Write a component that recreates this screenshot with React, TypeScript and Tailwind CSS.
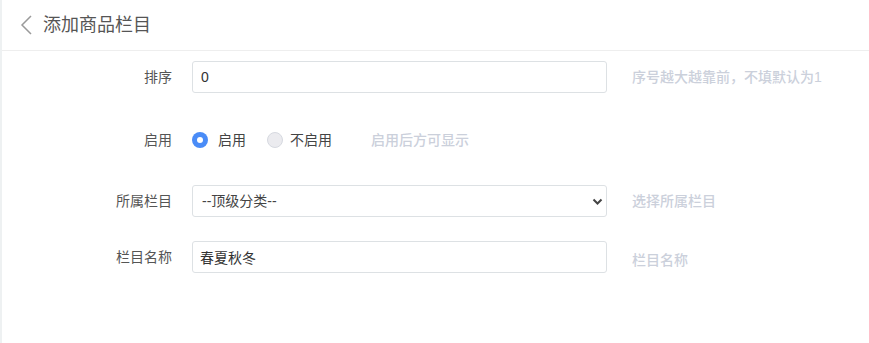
const font = { fontFamily: '"Liberation Sans", "Noto Sans CJK SC", sans-serif' };

function Label({ children }: { children: React.ReactNode }) {
  return <div className="w-[170px] shrink-0 text-right text-[14px] text-[#555]">{children}</div>;
}

function Hint({ children }: { children: React.ReactNode }) {
  return <div className="ml-[25px] text-[14px] font-medium text-[#cbd0db]">{children}</div>;
}

export default function App() {
  return (
    <div className="h-[343px] w-[869px] bg-white border-l-2 border-[#eef1f2]" style={font}>
      <div className="flex h-[51px] items-center border-b border-[#eeeeee] pl-[18px]">
        <svg className="h-[20px] w-[12px]" viewBox="0 0 12 20" fill="none">
          <path d="M11 1 L2 10 L11 19" stroke="#9a9a9a" strokeWidth="1.5" />
        </svg>
        <span className="ml-[11px] text-[18px] text-[#555]">添加商品栏目</span>
      </div>

      <div className="pt-[10px]">
        <div className="flex h-[32px] items-center">
          <Label>排序</Label>
          <input
            defaultValue="0"
            className="ml-5 h-[32px] w-[415px] rounded-[3px] border border-[#dde1e4] px-[8px] text-[14px] text-[#333] outline-none"
          />
          <Hint>序号越大越靠前，不填默认为1</Hint>
        </div>

        <div className="mt-[31px] flex h-[32px] items-center">
          <Label>启用</Label>
          <div className="ml-5 flex items-center text-[14px] text-[#444]">
            <span className="flex h-[16px] w-[16px] items-center justify-center rounded-full bg-[#4a8cf7]">
              <span className="h-[6px] w-[6px] rounded-full bg-white" />
            </span>
            <span className="ml-[10px]">启用</span>
            <span className="ml-[21px] h-[16px] w-[16px] rounded-full border border-[#d6d9e0] bg-[#ebebef]" />
            <span className="ml-[7px]">不启用</span>
          </div>
          <Hint>
            <span className="ml-[14px]">启用后方可显示</span>
          </Hint>
        </div>

        <div className="mt-[29px] flex h-[32px] items-center">
          <Label>所属栏目</Label>
          <div className="relative ml-5 h-[32px] w-[415px]">
            <select className="h-full w-full appearance-none rounded-[3px] border border-[#dde1e4] bg-white px-[9px] text-[14px] text-[#444] outline-none">
              <option>--顶级分类--</option>
            </select>
            <svg
              className="pointer-events-none absolute right-[4px] top-[12px] h-[9px] w-[11px]"
              viewBox="0 0 11 9"
              fill="none"
            >
              <path d="M1.5 2.5 L5.5 6.5 L9.5 2.5" stroke="#444" strokeWidth="2" />
            </svg>
          </div>
          <Hint>选择所属栏目</Hint>
        </div>

        <div className="mt-[24px] flex h-[32px] items-center">
          <Label>栏目名称</Label>
          <input
            defaultValue="春夏秋冬"
            className="ml-5 h-[32px] w-[415px] rounded-[3px] border border-[#dde1e4] px-[7px] text-[14px] text-[#333] outline-none"
          />
          <Hint>
            <span className="relative top-[3px]">栏目名称</span>
          </Hint>
        </div>
      </div>
    </div>
  );
}
